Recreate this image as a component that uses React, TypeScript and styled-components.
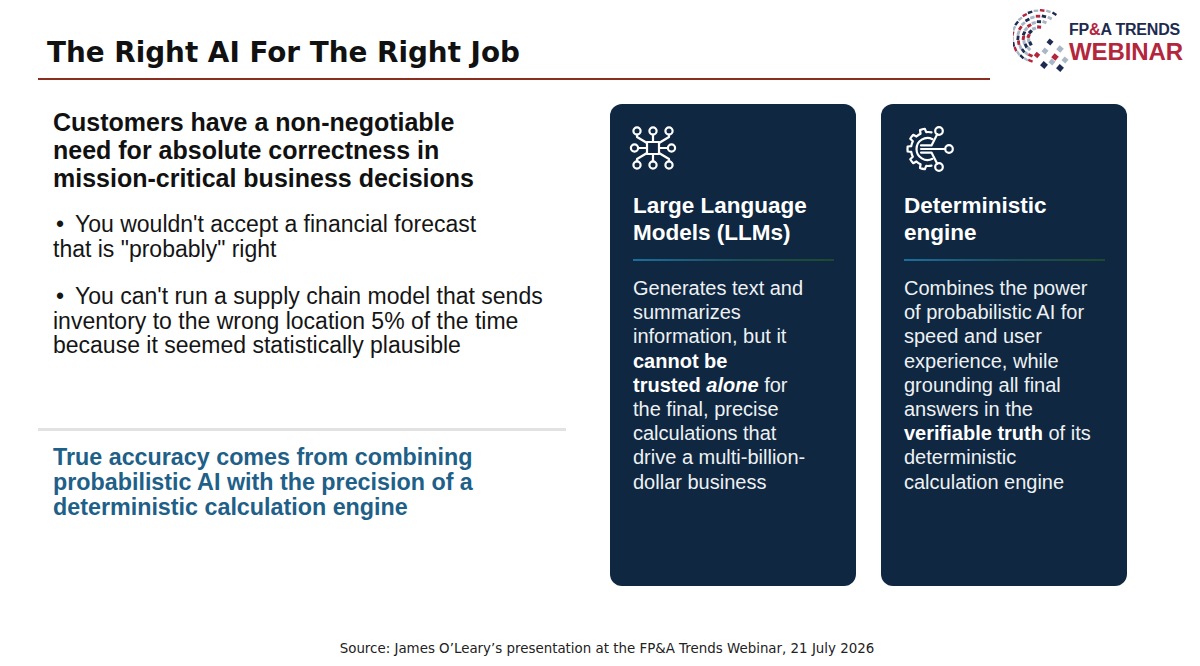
import React from 'react';
import styled, { createGlobalStyle } from 'styled-components';

// ============================================================================
// Global
// ============================================================================

const GlobalStyle = createGlobalStyle`
  html, body {
    margin: 0;
    padding: 0;
    background: #ffffff;
  }
  body {
    font-family: "Liberation Sans", Arial, sans-serif;
    color: #111111;
  }
`;

const NAVY = '#1d2b50';
const RED = '#b3263c';
const GREY = '#a9b6c6';

// ============================================================================
// Styled Components
// ============================================================================

const Slide = styled.div`
  width: 1200px;
  height: 666px;
  display: flex;
  flex-direction: column;
  overflow: hidden;
`;

const Header = styled.header`
  display: flex;
  align-items: flex-start;
  padding-left: 38px;
`;

const TitleBlock = styled.div`
  width: 952px;
  padding: 36px 0 8px 9px;
  box-sizing: border-box;
  border-bottom: 2px solid #8a2e1f;
`;

const Title = styled.h1`
  margin: 0;
  font-family: "DejaVu Sans", Verdana, sans-serif;
  font-weight: 700;
  font-size: 27.8px;
  line-height: 34px;
  color: #111111;
`;

const Logo = styled.div`
  display: flex;
  align-items: flex-start;
  margin: 9px 0 0 23px;
`;

const LogoText = styled.div`
  display: flex;
  flex-direction: column;
  padding-top: 13px;
  font-family: "Liberation Sans", Arial, sans-serif;
  font-weight: 700;
  line-height: 1;
`;

const LogoTop = styled.span`
  font-size: 16px;
  color: ${NAVY};
  letter-spacing: -0.2px;
  margin-bottom: 2px;
`;

const LogoAmp = styled.span`
  color: ${RED};
`;

const LogoBottom = styled.span`
  font-size: 24px;
  color: ${RED};
  letter-spacing: -0.1px;
`;

const Body = styled.main`
  display: flex;
  align-items: flex-start;
  gap: 44px;
  padding: 24px 0 0 38px;
`;

const LeftColumn = styled.section`
  width: 528px;
  padding-top: 4px;
  display: flex;
  flex-direction: column;
`;

const Lead = styled.h2`
  margin: 0 0 0 15px;
  font-size: 25px;
  line-height: 28px;
  font-weight: 700;
  color: #111111;
`;

const Bullet = styled.p<{ $gap: number }>`
  margin: ${p => p.$gap}px 0 0 15px;
  font-size: 23px;
  line-height: 24.5px;
  color: #151515;

  &::before {
    content: '•';
    display: inline-block;
    box-sizing: border-box;
    width: 22px;
    padding-left: 3px;
  }
`;

const Rule = styled.hr`
  margin: 70px 0 0;
  border: none;
  height: 3px;
  background: #e2e2e2;
`;

const Takeaway = styled.p`
  margin: 14px 0 0 15px;
  font-size: 23.3px;
  line-height: 25px;
  font-weight: 700;
  color: #1e6088;
`;

const Cards = styled.div`
  display: flex;
  gap: 25px;
`;

const Card = styled.article`
  width: 246px;
  height: 482px;
  box-sizing: border-box;
  padding: 20px 22px 0 23px;
  border-radius: 12px;
  background: #0f2740;
  color: #f4f6f8;
  display: flex;
  flex-direction: column;
`;

const IconBox = styled.div`
  height: 48px;
  margin-left: -4px;
  color: #ffffff;

  svg {
    display: block;
  }
`;

const CardTitle = styled.h3`
  margin: 20px 0 0;
  font-size: 22.5px;
  line-height: 27px;
  font-weight: 700;
  color: #ffffff;
`;

const CardRule = styled.div`
  margin-top: 13px;
  height: 2px;
  width: 201px;
  background: linear-gradient(90deg, #1b6f9c 0%, #1b4d5a 55%, #1d4a2c 100%);
`;

const CardText = styled.p`
  margin: 15px 0 0;
  font-size: 20px;
  line-height: 24.2px;
  color: #eef1f4;

  b {
    font-weight: 700;
    color: #ffffff;
  }
`;

const Footer = styled.footer`
  margin-top: auto;
  padding: 0 0 9px 14px;
  text-align: center;
  font-family: "DejaVu Sans", Verdana, sans-serif;
  font-size: 13.4px;
  line-height: 16px;
  color: #222222;
`;

// ============================================================================
// Drawings
// ============================================================================

const polar = (cx: number, cy: number, r: number, deg: number) => {
  const a = (deg * Math.PI) / 180;
  return [cx + r * Math.cos(a), cy + r * Math.sin(a)];
};

const LogoMark: React.FC = () => {
  const colours = [NAVY, GREY, RED, GREY, NAVY, RED, GREY];
  // spiral rings: radius shrinks as the arc turns from the top round to the left
  const rings = [
    { r0: 31, r1: 22, from: -58, to: -252, step: 12, w: 4.6, h: 2.4 },
    { r0: 25, r1: 17, from: -62, to: -246, step: 14, w: 4.4, h: 2.8 },
    { r0: 19, r1: 12, from: -70, to: -238, step: 17, w: 4.2, h: 3 },
    { r0: 13, r1: 8, from: -85, to: -215, step: 24, w: 4, h: 3.2 },
  ];
  const cx = 25;
  const cy = 31;
  const tiles: React.ReactNode[] = [];
  rings.forEach((ring, ri) => {
    let i = 0;
    for (let a = ring.from; a >= ring.to; a -= ring.step) {
      const t = (ring.from - a) / (ring.from - ring.to);
      const r = ring.r0 + (ring.r1 - ring.r0) * t;
      const [x, y] = polar(cx, cy, r, a);
      tiles.push(
        <rect
          key={`${ri}-${i}`}
          x={x - ring.w / 2}
          y={y - ring.h / 2}
          width={ring.w}
          height={ring.h}
          fill={colours[(i + ri * 3) % colours.length]}
          transform={`rotate(${a + 90} ${x} ${y})`}
        />
      );
      i++;
    }
  });
  const diamonds: [number, number, number, string][] = [
    [37, 33, 5, NAVY],
    [32, 42, 5, GREY],
    [47, 40, 5.4, GREY],
    [24, 46, 4.6, RED],
    [42, 48, 5.4, RED],
    [52, 51, 5, GREY],
    [39, 53, 5, GREY],
    [31, 56, 5.6, NAVY],
    [47, 59, 5.6, NAVY],
  ];
  return (
    <svg width="56" height="66" viewBox="0 0 56 66" aria-hidden>
      {tiles}
      {diamonds.map(([x, y, s, c], k) => (
        <rect
          key={`d${k}`}
          x={x - s / 2}
          y={y - s / 2}
          width={s}
          height={s}
          fill={c}
          transform={`rotate(40 ${x} ${y})`}
        />
      ))}
    </svg>
  );
};

const NetworkIcon: React.FC = () => (
  <svg width="48" height="48" viewBox="0 0 48 48" fill="none" stroke="currentColor" strokeWidth="2.2" strokeLinecap="round" strokeLinejoin="round">
    <rect x="18" y="18" width="12" height="12" />
    <circle cx="8" cy="7" r="3.6" />
    <circle cx="24" cy="7" r="3.6" />
    <circle cx="40" cy="7" r="3.6" />
    <circle cx="8" cy="41" r="3.6" />
    <circle cx="24" cy="41" r="3.6" />
    <circle cx="40" cy="41" r="3.6" />
    <circle cx="5.5" cy="24" r="3.6" />
    <circle cx="42.5" cy="24" r="3.6" />
    <path d="M24 10.6V18M8 10.6V13L18 19M40 10.6V13L30 19" />
    <path d="M24 37.4V30M8 37.4V35L18 29M40 37.4V35L30 29" />
    <path d="M9.1 24H18M38.9 24H30" />
  </svg>
);

const gearPath = (() => {
  const cx = 28;
  const cy = 25;
  const rIn = 17;
  const rOut = 20.5;
  const teeth = [-106, -143, -180, -217, -254];
  const pt = (r: number, a: number) => polar(cx, cy, r, a).map(v => v.toFixed(2)).join(' ');
  let d = `M${pt(rIn, -78)}`;
  teeth.forEach(c => {
    d += ` A${rIn} ${rIn} 0 0 0 ${pt(rIn, c + 10)}`;
    d += ` L${pt(rOut, c + 7)}`;
    d += ` A${rOut} ${rOut} 0 0 0 ${pt(rOut, c - 7)}`;
    d += ` L${pt(rIn, c - 10)}`;
  });
  d += ` A${rIn} ${rIn} 0 0 0 ${pt(rIn, -282)}`;
  return d;
})();

const GearIcon: React.FC = () => (
  <svg width="54" height="48" viewBox="0 0 54 48" fill="none" stroke="currentColor" strokeWidth="2.2" strokeLinecap="round" strokeLinejoin="round">
    <path d={gearPath} />
    <path d="M32.5 15.2A11 11 0 1 0 32.5 34.8" />
    <path d="M21 21.4H31.5L37.2 10.3" />
    <path d="M21 25H45.2" />
    <path d="M21 28.6H31.5L37.2 39.7" />
    <circle cx="39" cy="7" r="3.8" />
    <circle cx="49" cy="25" r="3.8" />
    <circle cx="39" cy="43" r="3.8" />
  </svg>
);

// ============================================================================
// App
// ============================================================================

const App: React.FC = () => (
  <>
    <GlobalStyle />
    <Slide>
      <Header>
        <TitleBlock>
          <Title>The Right AI For The Right Job</Title>
        </TitleBlock>
        <Logo>
          <LogoMark />
          <LogoText>
            <LogoTop>FP<LogoAmp>&amp;</LogoAmp>A TRENDS</LogoTop>
            <LogoBottom>WEBINAR</LogoBottom>
          </LogoText>
        </Logo>
      </Header>

      <Body>
        <LeftColumn>
          <Lead>
            Customers have a non-negotiable<br />
            need for absolute correctness in<br />
            mission-critical business decisions
          </Lead>
          <Bullet $gap={20}>
            You wouldn't accept a financial forecast<br />
            that is "probably" right
          </Bullet>
          <Bullet $gap={23}>
            You can't run a supply chain model that sends<br />
            inventory to the wrong location 5% of the time<br />
            because it seemed statistically plausible
          </Bullet>
          <Rule />
          <Takeaway>
            True accuracy comes from combining<br />
            probabilistic AI with the precision of a<br />
            deterministic calculation engine
          </Takeaway>
        </LeftColumn>

        <Cards>
          <Card>
            <IconBox><NetworkIcon /></IconBox>
            <CardTitle>Large Language<br />Models (LLMs)</CardTitle>
            <CardRule />
            <CardText>
              Generates text and<br />
              summarizes<br />
              information, but it<br />
              <b>cannot be</b><br />
              <b>trusted <i>alone</i></b> for<br />
              the final, precise<br />
              calculations that<br />
              drive a multi-billion-<br />
              dollar business
            </CardText>
          </Card>
          <Card>
            <IconBox><GearIcon /></IconBox>
            <CardTitle>Deterministic<br />engine</CardTitle>
            <CardRule />
            <CardText>
              Combines the power<br />
              of probabilistic AI for<br />
              speed and user<br />
              experience, while<br />
              grounding all final<br />
              answers in the<br />
              <b>verifiable truth</b> of its<br />
              deterministic<br />
              calculation engine
            </CardText>
          </Card>
        </Cards>
      </Body>

      <Footer>
        Source: James O’Leary’s presentation at the FP&amp;A Trends Webinar, 21 July 2026
      </Footer>
    </Slide>
  </>
);

export default App;
